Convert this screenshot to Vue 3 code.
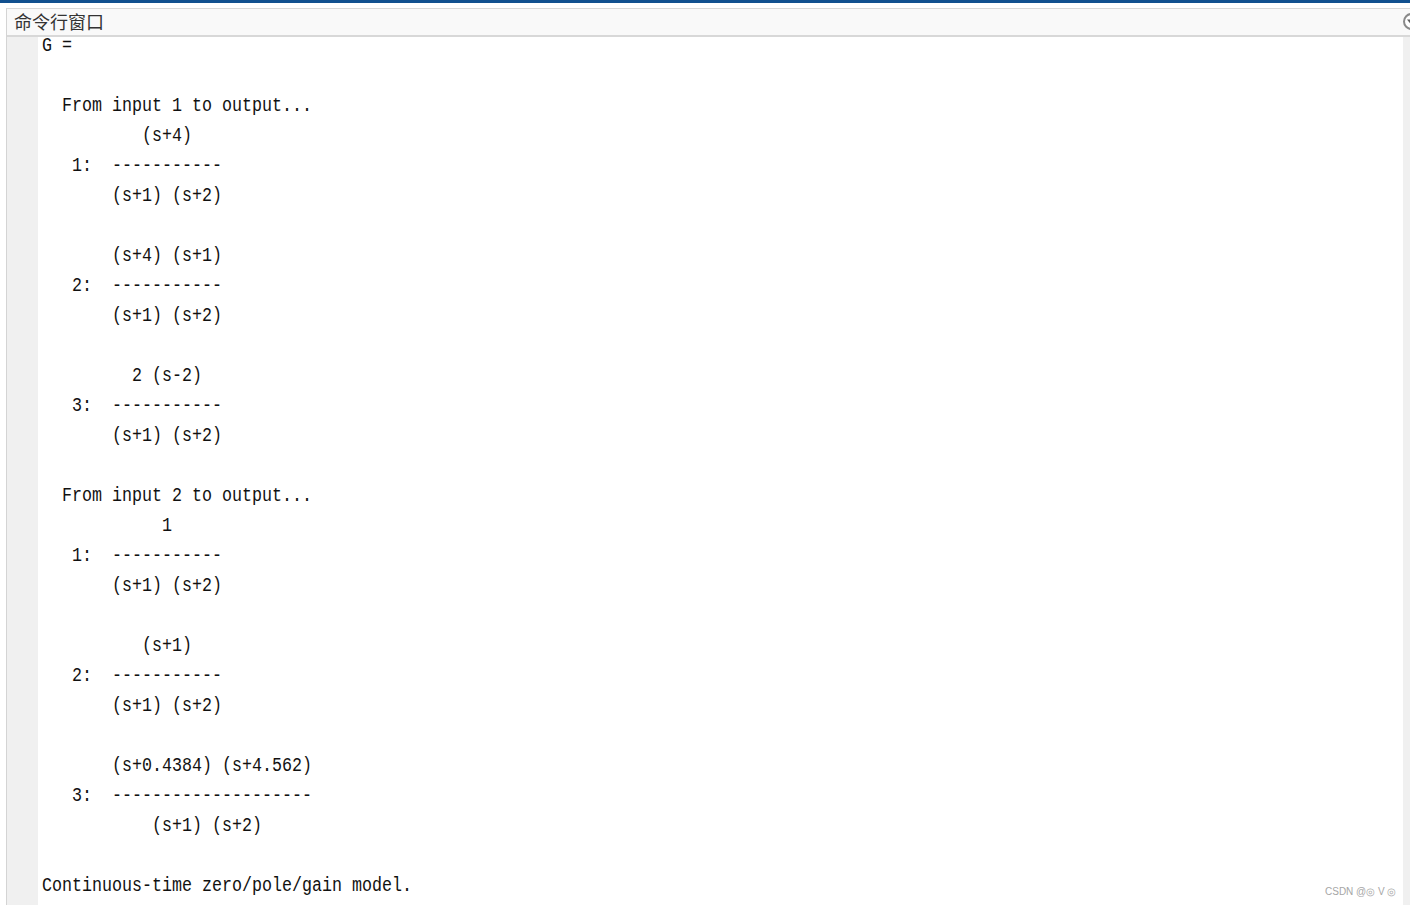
<script setup>
const lines = [
  'G =', '',
  '  From input 1 to output...',
  '          (s+4)',
  '   1:  -----------',
  '       (s+1) (s+2)',
  '',
  '       (s+4) (s+1)',
  '   2:  -----------',
  '       (s+1) (s+2)',
  '',
  '         2 (s-2)',
  '   3:  -----------',
  '       (s+1) (s+2)',
  '', 
  '  From input 2 to output...',
  '            1',
  '   1:  -----------',
  '       (s+1) (s+2)',
  '',
  '          (s+1)',
  '   2:  -----------',
  '       (s+1) (s+2)',
  '',
  '       (s+0.4384) (s+4.562)',
  '   3:  --------------------',
  '           (s+1) (s+2)',
  '',
  'Continuous-time zero/pole/gain model.'
]
</script>

<template>
  <div class="page">
    <div class="topbar"></div>
    <section class="panel">
      <header class="head">
        <span class="title">命令行窗口</span>
        <svg class="menu" width="7" height="20" viewBox="0 0 7 20">
          <circle cx="8.5" cy="9.5" r="7.5" fill="#fff" stroke="#8a8a8a" stroke-width="2" />
          <path d="M4 7.5h9L8.5 13z" fill="#5f5f5f" />
        </svg>
      </header>
      <div class="body">
        <div class="gutter"></div>
        <pre class="output"><div v-for="(l, i) in lines" :key="i" class="line">{{ l }}</div></pre>
        <div class="rail"></div>
      </div>
    </section>
    <div class="mark">CSDN @◎ V ◎</div>
  </div>
</template>

<style scoped>
.page {
  position: relative;
  width: 1410px;
  height: 905px;
  overflow: hidden;
  background: #fff;
  display: flex;
  flex-direction: column;
}
.topbar {
  height: 3px;
  flex: none;
  background: #11508f;
  margin-bottom: 5px;
}
.panel {
  flex: 1;
  min-height: 0;
  margin-left: 6px;
  border-left: 1px solid #d4d4d4;
  border-top: 1px solid #d8d8d8;
  display: flex;
  flex-direction: column;
}
.head {
  height: 26px;
  flex: none;
  background: #f9f9f9;
  border-bottom: 2px solid #d8d8d8;
  display: flex;
  align-items: center;
  justify-content: space-between;
  padding-left: 7px;
}
.title {
  font: 18px/24px "Noto Sans CJK SC", sans-serif;
  color: #333;
  margin-bottom: 3px;
}
.menu { flex: none; }
.body {
  flex: 1;
  min-height: 0;
  display: flex;
  overflow: hidden;
}
.gutter {
  width: 31px;
  flex: none;
  background: #f0f0f0;
}
.output {
  flex: 1;
  margin: 0;
  padding: 1px 0 0 4px;
  font: 20px/30px "Liberation Mono", monospace;
  color: #111;
}
.line {
  height: 30px;
  width: 1200px;
  transform: scaleX(0.8333);
  transform-origin: left center;
}
.line:first-child {
  height: 23px;
  line-height: 16px;
}
.rail {
  width: 7px;
  flex: none;
  background: #f0f0f0;
}
.mark {
  position: absolute;
  left: 1325px;
  top: 885px;
  font: 10px/13px "Liberation Sans", sans-serif;
  color: #a6a6a6;
}
</style>
